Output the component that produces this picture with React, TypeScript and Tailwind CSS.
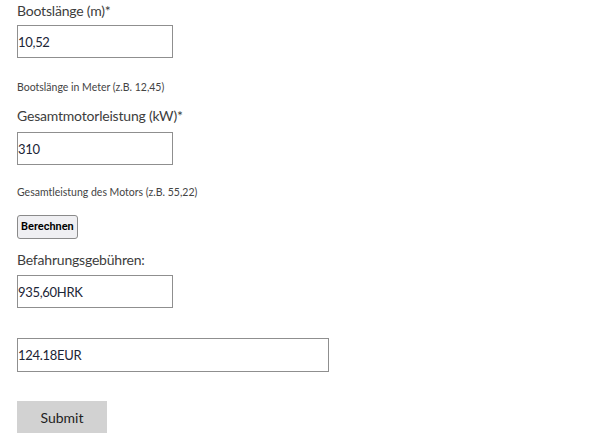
export default function App() {
  return (
    <div className="min-h-screen bg-white px-[17px] font-['Lato',sans-serif] text-[#3d3d3d]">
      <form className="flex flex-col items-start">
        <label htmlFor="laenge" className="block h-[22px] text-[14px] leading-[22px] tracking-[-0.2px]">
          Bootslänge (m)*
        </label>
        <input
          id="laenge"
          type="text"
          defaultValue="10,52"
          className="mt-[3px] h-[33px] w-[156px] border border-[#8f8f8f] px-0 text-[13px] tracking-[-0.3px] text-[#1c2536] outline-none"
        />
        <p className="mt-[21px] h-[16px] text-[10.5px] leading-[16px] text-[#444]">
          Bootslänge in Meter (z.B. 12,45)
        </p>

        <label htmlFor="leistung" className="mt-[10px] block h-[22px] text-[14px] leading-[22px] tracking-[-0.2px]">
          Gesamtmotorleistung (kW)*
        </label>
        <input
          id="leistung"
          type="text"
          defaultValue="310"
          className="mt-[5px] h-[33px] w-[156px] border border-[#8f8f8f] px-0 text-[13px] tracking-[-0.3px] text-[#1c2536] outline-none"
        />
        <p className="mt-[19px] h-[16px] text-[10.5px] leading-[16px] text-[#444]">
          Gesamtleistung des Motors (z.B. 55,22)
        </p>

        <button
          type="button"
          className="mt-[15px] h-[24px] rounded-[3px] border border-[#8a8a8a] bg-[#efeff2] px-[3px] font-['Roboto',sans-serif] text-[11px] font-semibold text-black"
        >
          Berechnen
        </button>

        <label className="mt-[10px] block h-[22px] text-[14px] leading-[22px] tracking-[-0.2px]">
          Befahrungsgebühren:
        </label>
        <input
          type="text"
          readOnly
          defaultValue="935,60HRK"
          className="mt-[4px] h-[33px] w-[156px] border border-[#8f8f8f] px-0 text-[13px] tracking-[-0.3px] text-[#1c2536] outline-none"
        />
        <input
          type="text"
          readOnly
          defaultValue="124.18EUR"
          className="mt-[30px] h-[34px] w-[312px] border border-[#8f8f8f] px-0 text-[13px] tracking-[-0.3px] text-[#1c2536] outline-none"
        />

        <button
          type="submit"
          className="mt-[29px] h-[32px] w-[90px] bg-[#d2d2d2] text-[14px] text-[#222]"
        >
          Submit
        </button>
      </form>
    </div>
  )
}
